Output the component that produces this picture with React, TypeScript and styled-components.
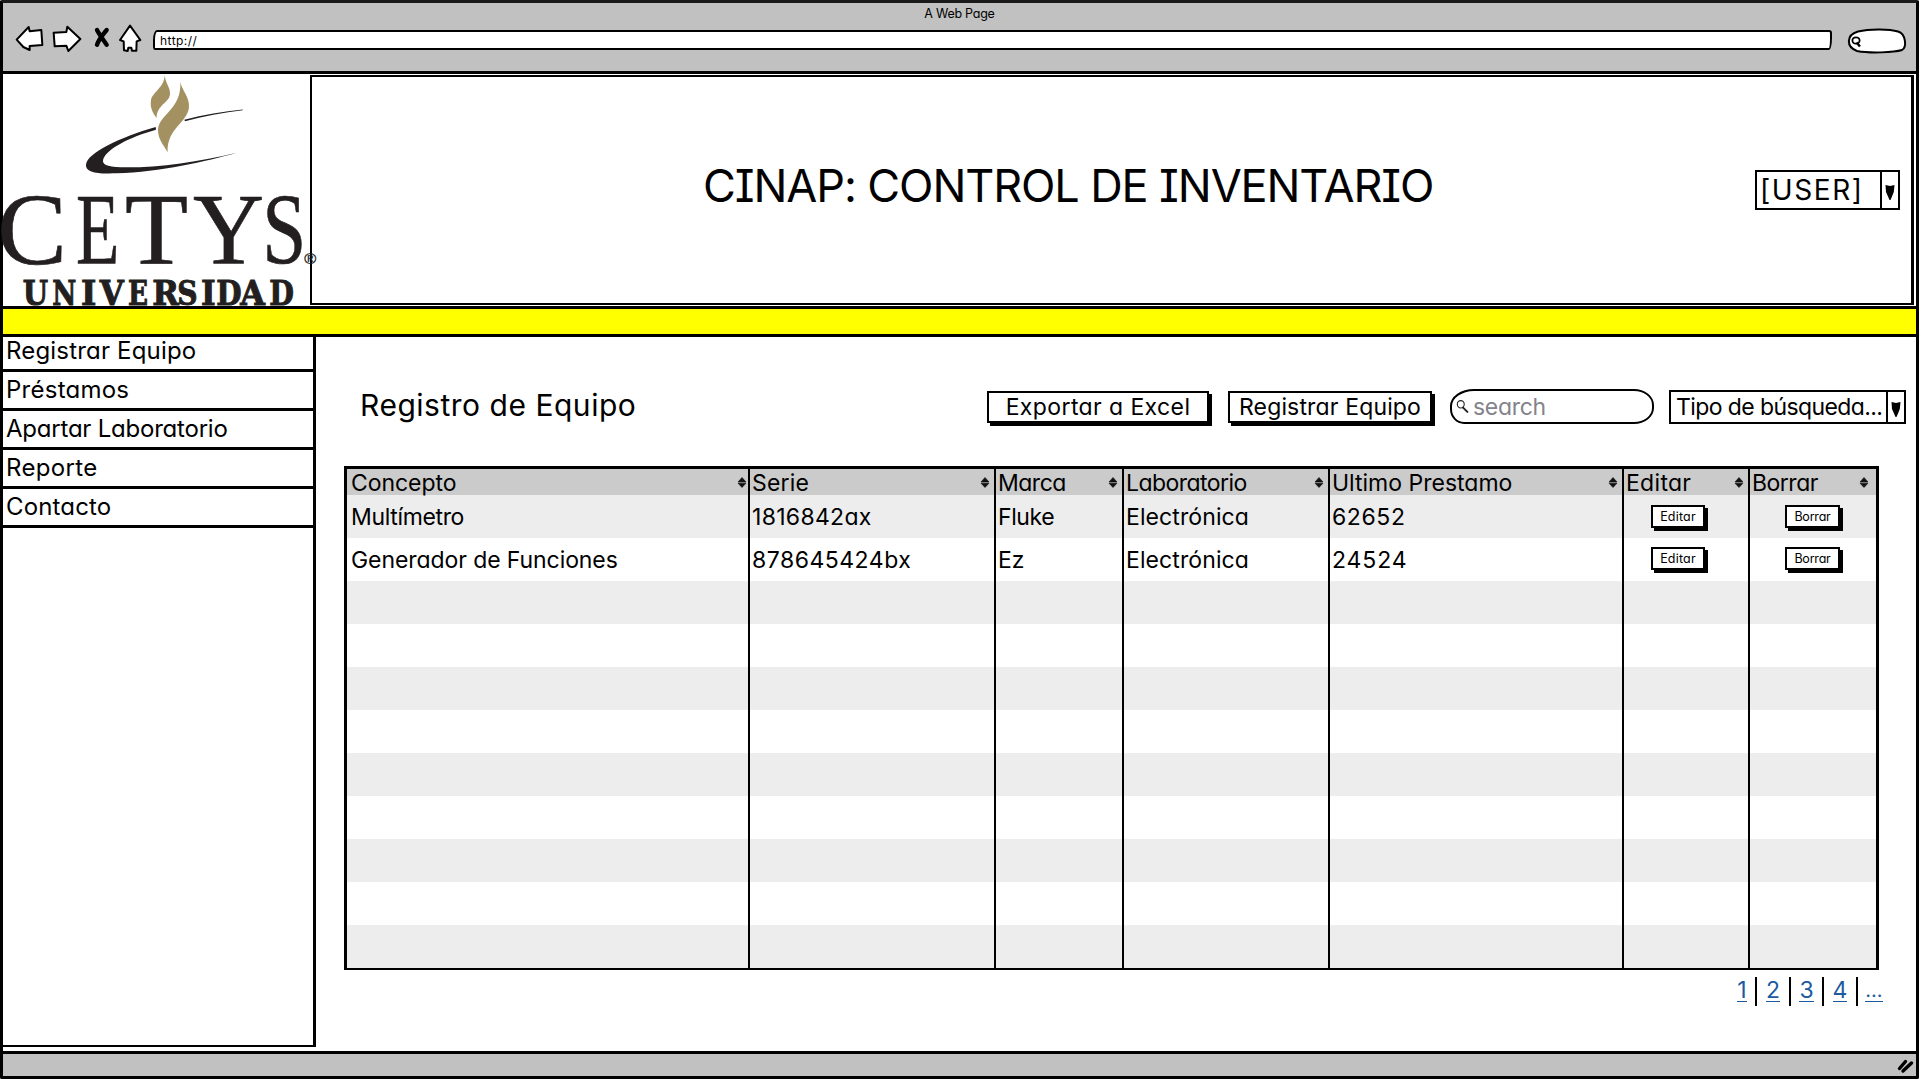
import React from "react";
import styled, { createGlobalStyle } from "styled-components";

const GlobalStyle = createGlobalStyle`
  * { box-sizing: border-box; }
  body {
    margin: 0;
    background: #fff;
    color: #000;
    font-family: Inter, "Open Sans", sans-serif;
    font-feature-settings: "cv11", "cv08";
    overflow: hidden;
  }
`;

const Frame = styled.div`
  width: 1919px;
  height: 1079px;
  display: flex;
  flex-direction: column;
  border: 3px solid #000;
  border-top-color: #1a1a1a;
  border-radius: 2px;
  background: #fff;
`;

const Label = styled.span<{ $size: number; $track?: number }>`
  font-size: ${(p) => p.$size}px;
  letter-spacing: ${(p) => p.$track ?? 0}px;
  white-space: pre;
`;

/* ---------- browser chrome ---------- */

const Chrome = styled.header`
  flex: none;
  height: 71px;
  display: flex;
  flex-direction: column;
  background: #c1c1c1;
  border-bottom: 3px solid #000;
`;

const PageTitle = styled.div`
  height: 20px;
  line-height: 19px;
  text-align: center;
`;

const NavBar = styled.div`
  display: flex;
  align-items: flex-start;
  padding-left: 11px;
`;

const NavIcons = styled.svg`
  flex: none;
  width: 130px;
  height: 32px;
  margin-top: -3px;
`;

const AddressBar = styled.div`
  display: flex;
  align-items: center;
  width: 1679px;
  height: 20px;
  margin: 7px 0 0 9px;
  padding-left: 5px;
  border: 2px solid #000;
  border-radius: 4px 3px 3px 2px / 10px 3px 12px 4px;
  background: #fff;
`;

const ChromeSearch = styled.svg`
  flex: none;
  width: 62px;
  height: 28px;
  margin: 4px 0 0 14px;
`;

/* ---------- page header ---------- */

const Header = styled.div`
  flex: none;
  display: flex;
  height: 232px;
`;

const Logo = styled.svg`
  flex: none;
  position: relative;
  z-index: 1;
  width: 307px;
  height: 232px;
  overflow: visible;
`;

const Banner = styled.div`
  display: flex;
  align-items: center;
  width: 1604px;
  margin: 1px 0;
  padding: 0 11px 0 391px;
  border: 2px solid #000;
  border-right-width: 3px;
`;

const Title = styled.h1`
  flex: 1;
  margin: 0 0 3px;
  font-weight: 400;
  line-height: 54px;
`;

const Combo = styled.div<{ $width: number; $height: number }>`
  display: flex;
  width: ${(p) => p.$width}px;
  height: ${(p) => p.$height}px;
  border: 2px solid #000;
  background: #fff;
`;

const ComboValue = styled.div<{ $pad: number }>`
  flex: 1;
  display: flex;
  align-items: center;
  padding-left: ${(p) => p.$pad}px;
`;

const ComboArrow = styled.div`
  display: flex;
  align-items: center;
  justify-content: center;
  width: 18px;
  padding-top: 2px;
  border-left: 2px solid #000;
`;

const Stripe = styled.div`
  flex: none;
  position: relative;
  z-index: 1;
  height: 31px;
  background: #ff0;
  border: solid #000;
  border-width: 3px 0;
`;

/* ---------- body ---------- */

const Body = styled.div`
  flex: 1;
  display: flex;
  min-height: 0;
`;

const Sidebar = styled.nav`
  flex: none;
  width: 313px;
  height: 710px;
  border: solid #000;
  border-width: 0 3px 2px 0;
`;

const Menu = styled.ul`
  margin: -4px 0 0;
  padding: 0;
  list-style: none;
`;

const MenuItem = styled.li`
  height: 39px;
  padding-left: 3px;
  line-height: 36px;
  border-bottom: 3px solid #000;
`;

const Main = styled.main`
  flex: 1;
  display: flex;
  flex-direction: column;
  padding: 52px 10px 0 29px;
`;

const Tools = styled.div`
  display: flex;
  align-items: center;
  height: 35px;
`;

const Heading = styled.h2`
  width: 642px;
  margin: 0;
  padding-left: 15px;
  font-weight: 400;
  line-height: 36px;
`;

const Button = styled.button<{ $width: number; $height: number; $after?: number; $lift?: number }>`
  display: flex;
  align-items: center;
  justify-content: center;
  flex: none;
  width: ${(p) => p.$width}px;
  height: ${(p) => p.$height}px;
  margin: 0 ${(p) => p.$after ?? 0}px ${(p) => p.$lift ?? 0}px 0;
  padding: 0;
  border: 2px solid #000;
  background: #fff;
  color: #000;
  box-shadow: 3px 3px 0 #000;
  font-family: inherit;
  font-feature-settings: inherit;
`;

const SearchField = styled.div`
  display: flex;
  align-items: center;
  gap: 4px;
  width: 204px;
  height: 35px;
  margin-right: 15px;
  padding-left: 4px;
  border: 2px solid #000;
  border-radius: 24px 20px 20px 14px / 17px 16px 16px 15px;
  color: #83838c;
`;

const Table = styled.div`
  width: 1535px;
  margin: 42px 0 0 -1px;
  border: 3px solid #000;
  border-bottom-width: 2px;
`;

const Row = styled.div<{ $tone: string; $height: number }>`
  display: grid;
  grid-template-columns: 401px 246px 128px 206px 294px 126px 128px;
  height: ${(p) => p.$height}px;
  background: ${(p) => p.$tone};
`;

const Cell = styled.div<{ $indent?: number; $end?: number }>`
  display: flex;
  align-items: center;
  justify-content: space-between;
  padding-left: ${(p) => p.$indent ?? 2}px;
  padding-right: ${(p) => p.$end ?? 0}px;
  & + & { border-left: 2px solid #000; }
`;

const Pager = styled.div`
  display: flex;
  align-self: flex-end;
  margin: 7px 16px 0 0;
`;

const PageLink = styled.a<{ $width: number }>`
  width: ${(p) => p.$width}px;
  height: 29px;
  display: flex;
  justify-content: center;
  color: #1d5a9e;
  & + & { border-left: 2px solid #000; }
  span {
    height: 25px;
    line-height: 26px;
    border-bottom: 1px solid #1d5a9e;
  }
`;

const StatusBar = styled.footer`
  flex: none;
  display: flex;
  justify-content: flex-end;
  align-items: center;
  height: 25px;
  padding: 2px 1px 0 0;
  border-top: 3px solid #000;
  background: #c1c1c1;
`;

/* ---------- drawings ---------- */

const CETYS: [string, number, number][] = [
  ["C", -8, 209], ["E", 228, 130], ["T", 375, 189], ["Y", 579, 213], ["S", 787, 132],
];
const UNIVERSIDAD: [string, number, number][] = [
  ["U", 68, 76], ["N", 157, 72], ["I", 243, 46], ["V", 299, 72], ["E", 384, 60], ["R", 457, 80],
  ["S", 532, 61], ["I", 603, 44], ["D", 649, 76], ["A", 721, 74], ["D", 808, 74],
];

function CetysLogo() {
  return (
    <Logo viewBox="9 222 921 696" preserveAspectRatio="none">
      <path fill="#231f20" d="M467 381C360 412 262 458 258 494C256 522 310 521 350 520C480 516 620 484 710 458C600 485 480 502 380 502C330 502 308 496 309 482C312 450 390 410 468 389Z" />
      <path fill="#231f20" d="M553 359C610 344 670 334 728 328.500L728 330.500C670 337 610 349 555 364Z" />
      <path fill="#a39161" d="M494 224C496 250 512 262 510 283C508 308 470 315 470 354C455 335 450 320 453 300C458 275 494 262 494 224Z" />
      <path fill="#a39161" d="M541 246C545 270 569 290 567 322C563 368 500 385 503 457C488 430 475 420 474 390C476 342 545 330 541 246Z" />
      <g fill="#231f20" stroke="#231f20" fontFamily="'Liberation Serif', serif">
        {CETYS.map(([ch, x, w]) => (
          <text key={ch} x={x} y={792} fontSize={302} strokeWidth={2} textLength={w} lengthAdjust="spacingAndGlyphs">{ch}</text>
        ))}
      </g>
      <g fill="#231f20" stroke="#231f20" strokeWidth={3} fontFamily="'DejaVu Serif', serif" fontWeight="700">
        {UNIVERSIDAD.map(([ch, x, w], i) => (
          <text key={i} x={x} y={915} fontSize={99} textLength={w} lengthAdjust="spacingAndGlyphs">{ch}</text>
        ))}
      </g>
      <text x={913} y={793} fontSize={46} fill="#231f20" stroke="#231f20" fontFamily="'Liberation Sans', sans-serif" textLength={36} lengthAdjust="spacingAndGlyphs">®</text>
    </Logo>
  );
}

function BrowserIcons() {
  return (
    <NavIcons viewBox="12 0 390 96" preserveAspectRatio="none">
      <g transform="translate(0 -24)" fill="#fff" stroke="#000" strokeWidth="6" strokeLinejoin="round">
        <path d="M20 83L56 45L59 58L94 54L97 99L59 102L59 114L40 105Z" />
        <path d="M131 62L169 60L172 44L211 81L175 117L169 101L134 103Z" />
        <path d="M360 41L391 84L380 88L379 116L366 116L364 107L355 107L353 117L342 115L341 88L330 84Z" />
        <path d="M261 54C268 68 280 84 290 98M290 54C278 68 266 84 261 98" fill="none" strokeWidth="13" strokeLinecap="round" />
      </g>
    </NavIcons>
  );
}

function Magnifier({ size }: { size: number }) {
  return (
    <svg width={size} height={size} viewBox="0 0 12 12" fill="none" stroke="#222">
      <ellipse cx="4.400" cy="4" rx="3.200" ry="3.400" strokeWidth="1" />
      <path d="M6.500 7L10.500 11" strokeWidth="1.800" strokeLinecap="round" />
    </svg>
  );
}

function DownArrow() {
  return (
    <svg width="10" height="18" viewBox="0 0 10 18">
      <path d="M0.500 3L5 4L9.500 3L8.800 10L7 14.500L5.500 18L4.500 18L3 14.500L1 10Z" fill="#000" />
    </svg>
  );
}

function SortIcon() {
  return (
    <svg width="10" height="12" viewBox="0 0 10 12">
      <path d="M5 0.500L9 5H1ZM1 6.200H9L5 10.500Z" fill="#111" stroke="#111" strokeWidth="0.600" />
    </svg>
  );
}

/* ---------- data ---------- */

type Text = [string, number];

const MENU: Text[] = [
  ["Registrar Equipo", 0.18], ["Préstamos", 0.25], ["Apartar Laboratorio", -0.22], ["Reporte", 0.35], ["Contacto", 0.15],
];

const COLUMNS: [string, number, number][] = [
  ["Concepto", -0.05, 1], ["Serie", 0.2, 4], ["Marca", -0.5, 4], ["Laboratorio", -0.55, 4],
  ["Ultimo Prestamo", 0, 4], ["Editar", 0.3, 4], ["Borrar", -0.5, 7],
];

const ITEMS: Text[][] = [
  [["Multímetro", -0.35], ["1816842ax", 0.3], ["Fluke", -0.4], ["Electrónica", 0.1], ["62652", 0.6]],
  [["Generador de Funciones", -0.08], ["878645424bx", 0.5], ["Ez", 0], ["Electrónica", 0.1], ["24524", 0.9]],
];

const EMPTY_ROWS = Array.from({ length: 9 }, (_, i) => i);
const tone = (i: number) => (i % 2 === 0 ? "#ededed" : "#ffffff");

export default function App() {
  return (
    <>
      <GlobalStyle />
      <Frame>
        <Chrome>
          <PageTitle><Label $size={12.5} $track={-0.25}>A Web Page</Label></PageTitle>
          <NavBar>
            <BrowserIcons />
            <AddressBar><Label $size={12} $track={0.45}>http://</Label></AddressBar>
            <ChromeSearch viewBox="0 0 62 28" fill="none" stroke="#000" strokeWidth="2">
              <path fill="#fff" d="M12 4.500C24 1.500 44 2 52 4.500C60 7 61 20 56 23C48 25.500 24 26.500 11 24C0 20 0 8 12 4.500Z" />
              <ellipse cx="10" cy="13.500" rx="3.600" ry="3.200" strokeWidth="1.800" />
              <path d="M10.500 15.500L14 19.500" strokeWidth="2.400" />
            </ChromeSearch>
          </NavBar>
        </Chrome>

        <Header>
          <CetysLogo />
          <Banner>
            <Title><Label $size={45} $track={-1.1}>CINAP: CONTROL DE INVENTARIO</Label></Title>
            <Combo $width={145} $height={40}>
              <ComboValue $pad={3}><Label $size={28} $track={1.6}>[USER]</Label></ComboValue>
              <ComboArrow><DownArrow /></ComboArrow>
            </Combo>
          </Banner>
        </Header>
        <Stripe />

        <Body>
          <Sidebar>
            <Menu>
              {MENU.map(([text, track]) => (
                <MenuItem key={text}><Label $size={24} $track={track}>{text}</Label></MenuItem>
              ))}
            </Menu>
          </Sidebar>
          <Main>
            <Tools>
              <Heading><Label $size={30} $track={0.52}>Registro de Equipo</Label></Heading>
              <Button $width={222} $height={32} $after={19}><Label $size={23} $track={0.4}>Exportar a Excel</Label></Button>
              <Button $width={204} $height={32} $after={18}><Label $size={23} $track={0.15}>Registrar Equipo</Label></Button>
              <SearchField>
                <Magnifier size={13} />
                <Label $size={23} $track={-0.3}>search</Label>
              </SearchField>
              <Combo $width={237} $height={34}>
                <ComboValue $pad={5}><Label $size={23} $track={-0.6}>Tipo de búsqueda...</Label></ComboValue>
                <ComboArrow><DownArrow /></ComboArrow>
              </Combo>
            </Tools>

            <Table>
              <Row $tone="#cbcbcb" $height={26}>
                {COLUMNS.map(([text, track, end], i) => (
                  <Cell key={text} $indent={i === 0 ? 4 : 2} $end={end}>
                    <Label $size={23} $track={track}>{text}</Label>
                    <SortIcon />
                  </Cell>
                ))}
              </Row>
              {ITEMS.map((item, r) => (
                <Row key={r} $tone={tone(r)} $height={43}>
                  {item.map(([text, track], i) => (
                    <Cell key={i} $indent={i === 0 ? 4 : 2}><Label $size={23} $track={track}>{text}</Label></Cell>
                  ))}
                  <Cell $indent={27}>
                    <Button $width={54} $height={23} $lift={r * 2}><Label $size={12.5} $track={0.2}>Editar</Label></Button>
                  </Cell>
                  <Cell $indent={35}>
                    <Button $width={55} $height={23} $lift={r * 2}><Label $size={12.5} $track={-0.2}>Borrar</Label></Button>
                  </Cell>
                </Row>
              ))}
              {EMPTY_ROWS.map((r) => (
                <Row key={r} $tone={tone(r)} $height={43}>
                  {COLUMNS.map(([text]) => <Cell key={text} />)}
                </Row>
              ))}
            </Table>

            <Pager>
              <PageLink $width={26}><Label $size={23}>1</Label></PageLink>
              <PageLink $width={34}><Label $size={23}>2</Label></PageLink>
              <PageLink $width={33}><Label $size={23}>3</Label></PageLink>
              <PageLink $width={34}><Label $size={23}>4</Label></PageLink>
              <PageLink $width={34}><Label $size={20}>...</Label></PageLink>
            </Pager>
          </Main>
        </Body>

        <StatusBar>
          <svg width="18" height="16" viewBox="0 0 18 16" stroke="#000" strokeWidth="3.400" strokeLinecap="round">
            <path d="M2.500 10.500L8.500 3.500M6 13L14.500 5" />
          </svg>
        </StatusBar>
      </Frame>
    </>
  );
}
